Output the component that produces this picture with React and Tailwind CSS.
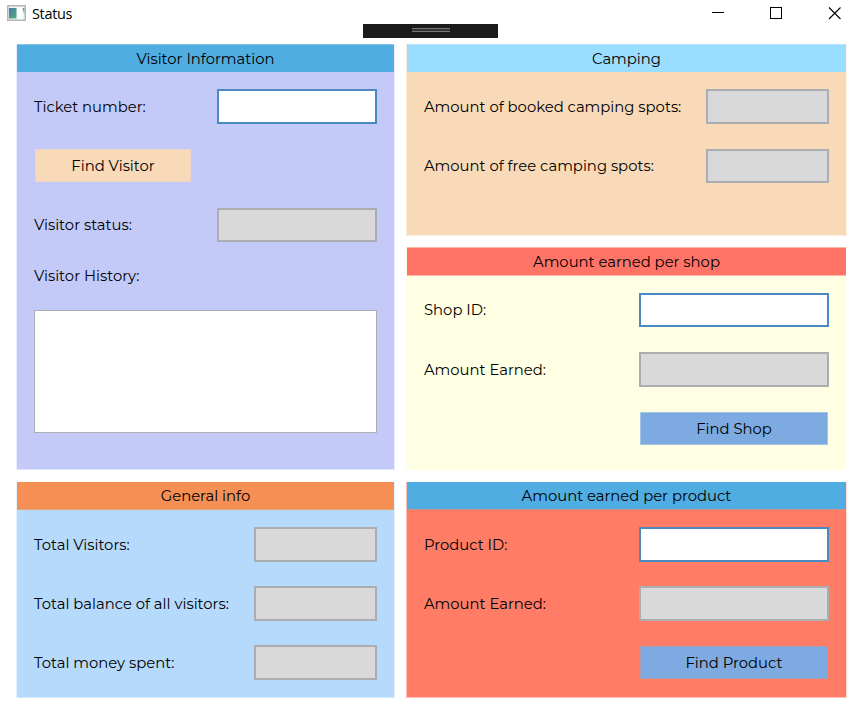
function Label({ className = "", children }) {
  return <span className={`block whitespace-nowrap leading-5 ${className}`}>{children}</span>;
}

function Field({ disabled = false, className = "" }) {
  const look = disabled ? "border-[#abadb0] bg-[#d9d9d9]" : "border-[#4a8ac2] bg-white";
  return <input type="text" disabled={disabled} className={`block shrink-0 border-2 outline-none ${look} ${className}`} />;
}

function Row({ className = "", children }) {
  return <div className={`flex items-start justify-between ${className}`}>{children}</div>;
}

function Header({ className = "", children }) {
  return (
    <h2 className={`flex items-start justify-center pt-1 ${className}`}>
      <Label>{children}</Label>
    </h2>
  );
}

function TitleBar() {
  return (
    <header className="flex h-[44px] shrink-0 items-start">
      <svg className="ml-[7px] mt-[5px] shrink-0" width="19" height="16" viewBox="0 0 19 16">
        <defs>
          <linearGradient id="pane" x1="0" y1="0" x2="1" y2="1">
            <stop offset="0" stopColor="#4379b0" />
            <stop offset="1" stopColor="#58ae7c" />
          </linearGradient>
        </defs>
        <rect x="0.75" y="0.75" width="17.5" height="14.5" fill="#f4f5f6" stroke="#b2b5b9" strokeWidth="1.5" />
        <rect x="2" y="3" width="7.5" height="10.5" fill="url(#pane)" />
        <rect x="10.5" y="2.5" width="4.5" height="11" fill="#fff" />
        <path d="M15.5 3H17.3V9.5Z" fill="#5fa392" />
      </svg>
      <span className="ml-[6px] mt-[4px] w-[331px] font-['Open_Sans','Noto_Sans',sans-serif] text-[14.5px] leading-5 tracking-[-0.35px] text-black">
        Status
      </span>
      <div className="mt-6 flex h-3.5 w-[135px] justify-center bg-[#1b1b1b] pt-1">
        <div className="h-1 w-[38px] border-y border-[#767676] bg-[#333]" />
      </div>
      <svg className="ml-[214px] mt-[7px]" width="130" height="13" fill="none" stroke="#000" shapeRendering="crispEdges">
        <path d="M0 5.5H12" />
        <rect x="58.5" y="0.5" width="11" height="11" />
        <path shapeRendering="auto" d="M117 0.5L128.5 12M128.5 0.5L117 12" strokeWidth="1.1" />
      </svg>
    </header>
  );
}

export default function App() {
  return (
    <div className="flex h-[704px] w-[863px] flex-col overflow-hidden bg-white font-['Montserrat','Inter',sans-serif] text-[14.8px] text-black">
      <TitleBar />
      <main className="flex pl-[17px]">
        <div className="flex w-[377px] flex-col gap-3">
          <section className="h-[426px] border-b border-[#e0e3fb] bg-[#c4caf8] shadow-[1px_0_0_#eceefd,-1px_0_0_#eceefd]">
            <Header className="h-7 border-t border-[#82c4ea] bg-[#50ade2]">Visitor Information</Header>
            <div className="px-[17px] pt-[17px]">
              <Row className="h-[60px]">
                <Label className="pt-2">Ticket number:</Label>
                <Field className="h-[35px] w-40" />
              </Row>
              <button className="ml-px flex h-[33px] w-[156px] items-center justify-center border border-[#ecd5c8] bg-[#f9dab8]">
                <Label>Find Visitor</Label>
              </button>
              <Row className="mt-[26px] h-[58px]">
                <Label className="pt-[7px]">Visitor status:</Label>
                <Field disabled className="h-[34px] w-40" />
              </Row>
              <Label>Visitor History:</Label>
              <textarea className="mt-6 block h-[123px] w-[343px] resize-none border border-[#abadb3] bg-white outline-none" />
            </div>
          </section>
          <section className="h-[216px] border-b border-[#d3e9fd] bg-[#b6dafb] shadow-[1px_0_0_#e6f3fe,-1px_0_0_#e6f3fe]">
            <Header className="h-7 border-b border-[#e2a378] bg-[#f68f54]">General info</Header>
            <div className="flex flex-col gap-6 px-[17px] pt-[17px]">
              <Row><Label className="pt-2">Total Visitors:</Label><Field disabled className="h-[35px] w-[123px]" /></Row>
              <Row><Label className="pt-2">Total balance of all visitors:</Label><Field disabled className="h-[35px] w-[123px]" /></Row>
              <Row><Label className="pt-2">Total money spent:</Label><Field disabled className="h-[35px] w-[123px]" /></Row>
            </div>
          </section>
        </div>
        <div className="ml-3 flex w-[440px] flex-col gap-3">
          <section className="h-[192px] border-b border-l border-[#fcecdb] bg-[#f9dab8] shadow-[1px_0_0_#fdf3e8]">
            <Header className="h-7 border-t border-[#b5e6ff] bg-[#99ddff]">Camping</Header>
            <div className="px-[17px] pt-[17px]">
              <Row className="h-[60px]"><Label className="pt-2">Amount of booked camping spots:</Label><Field disabled className="h-[35px] w-[123px]" /></Row>
              <Row><Label className="pt-[7px]">Amount of free camping spots:</Label><Field disabled className="h-[34px] w-[123px]" /></Row>
            </div>
          </section>
          <section className="-mt-px h-[223px] border-l border-[#fffff0] bg-[#ffffe3]">
            <Header className="h-[29px] border-y border-[#ffb5a6] bg-[#ff7467]">Amount earned per shop</Header>
            <div className="px-[17px] pt-[17px]">
              <Row className="h-[59px]"><Label className="pt-[7px]">Shop ID:</Label><Field className="h-[34px] w-[190px]" /></Row>
              <Row className="h-[60px]"><Label className="pt-2">Amount Earned:</Label><Field disabled className="h-[35px] w-[190px]" /></Row>
              <button className="ml-auto mr-px flex h-[33px] w-[188px] items-center justify-center border border-[#a5c6e3] bg-[#7caae1]">
                <Label>Find Shop</Label>
              </button>
            </div>
          </section>
          <section className="h-[216px] border-b border-l border-[#ffbeb3] bg-[#ff7d66] shadow-[1px_0_0_#ffd8d1]">
            <Header className="h-7 border-b border-[#cf8f8c] bg-[#50ade2]">Amount earned per product</Header>
            <div className="px-[17px] pt-[17px]">
              <Row className="h-[59px]"><Label className="pt-2">Product ID:</Label><Field className="h-[35px] w-[190px]" /></Row>
              <Row className="h-[60px]"><Label className="pt-2">Amount Earned:</Label><Field disabled className="h-[35px] w-[190px]" /></Row>
              <button className="ml-auto mr-px flex h-[33px] w-[188px] items-center justify-center border border-[#a79eb5] bg-[#7caae1]">
                <Label>Find Product</Label>
              </button>
            </div>
          </section>
        </div>
      </main>
    </div>
  );
}
